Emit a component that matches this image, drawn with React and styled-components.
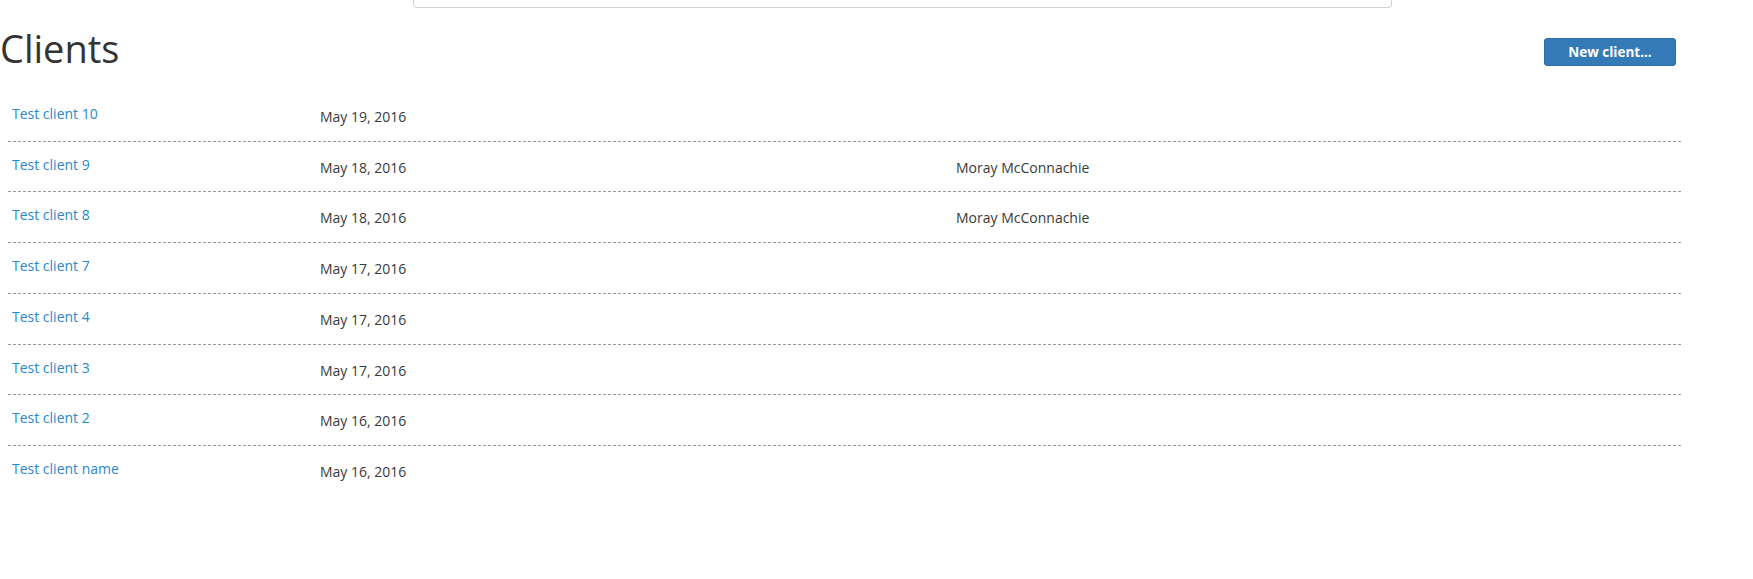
import React from "react";
import styled, { createGlobalStyle } from "styled-components";

const GlobalStyle = createGlobalStyle`
    html, body {
        margin: 0;
        padding: 0;
        background: #fff;
    }
    body {
        font-family: "Open Sans", "Liberation Sans", sans-serif;
        font-size: 14px;
        line-height: 20px;
        color: #333;
    }
`;

const Page = styled.div`
    width: 1681px;
`;

const SearchStub = styled.div`
    box-sizing: border-box;
    width: 979px;
    height: 8px;
    margin-left: 413px;
    border: 1px solid #d4d4d4;
    border-top: none;
    border-radius: 0 0 4px 4px;
`;

const Header = styled.div`
    display: flex;
    justify-content: space-between;
    align-items: flex-start;
    padding-right: 5px;
`;

const Title = styled.h1`
    margin: 20px 0 21px 0;
    font-size: 38px;
    font-weight: 400;
    line-height: 1.1;
    color: #333;
`;

const Button = styled.button`
    box-sizing: border-box;
    width: 132px;
    height: 28px;
    margin-top: 30px;
    padding: 0;
    border: 1px solid #2e6da4;
    border-radius: 3px;
    background: #337ab7;
    color: #fff;
    font-family: "Open Sans", "Liberation Sans", sans-serif;
    font-size: 13.5px;
    font-weight: 700;
    cursor: pointer;
`;

const List = styled.div`
    margin-left: 8px;
`;

const Row = styled.div`
    box-sizing: border-box;
    display: grid;
    grid-template-columns: 308px 636px 1fr;
    align-items: start;
    height: 50.75px;
    border-bottom: ${(p) => (p.last ? "none" : "1px dashed #9a9a9a")};
`;

const Cell = styled.div`
    padding: ${(p) => (p.link ? "13px" : "16px")} 4px 0 4px;
    white-space: nowrap;
    color: #3a3a3a;
`;

const NameLink = styled.a`
    color: #2a88cc;
    text-decoration: none;
`;

const clients = [
    { name: "Test client 10", date: "May 19, 2016", owner: "" },
    { name: "Test client 9", date: "May 18, 2016", owner: "Moray McConnachie" },
    { name: "Test client 8", date: "May 18, 2016", owner: "Moray McConnachie" },
    { name: "Test client 7", date: "May 17, 2016", owner: "" },
    { name: "Test client 4", date: "May 17, 2016", owner: "" },
    { name: "Test client 3", date: "May 17, 2016", owner: "" },
    { name: "Test client 2", date: "May 16, 2016", owner: "" },
    { name: "Test client name", date: "May 16, 2016", owner: "" },
];

export default function App() {
    return (
        <Page>
            <GlobalStyle />
            <SearchStub />
            <Header>
                <Title>Clients</Title>
                <Button>New client...</Button>
            </Header>
            <List>
                {clients.map((c, i) => (
                    <Row key={c.name} last={i === clients.length - 1}>
                        <Cell link>
                            <NameLink href="#">{c.name}</NameLink>
                        </Cell>
                        <Cell>{c.date}</Cell>
                        <Cell>{c.owner}</Cell>
                    </Row>
                ))}
            </List>
        </Page>
    );
}
